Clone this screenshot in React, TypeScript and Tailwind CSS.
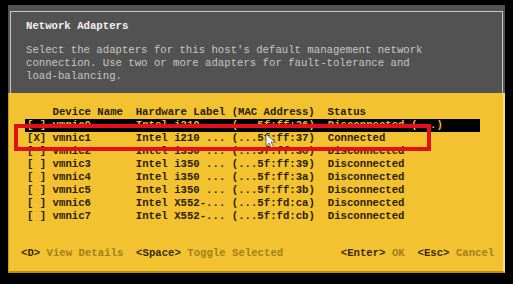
const rows = [
  { box: "[ ]", name: "vmnic0", hw: "Intel i210 ...", mac: "(...5f:ff:36)", status: "Disconnected (...)" },
  { box: "[X]", name: "vmnic1", hw: "Intel i210 ...", mac: "(...5f:ff:37)", status: "Connected" },
  { box: "[ ]", name: "vmnic2", hw: "Intel i350 ...", mac: "(...5f:ff:38)", status: "Disconnected" },
  { box: "[ ]", name: "vmnic3", hw: "Intel i350 ...", mac: "(...5f:ff:39)", status: "Disconnected" },
  { box: "[ ]", name: "vmnic4", hw: "Intel i350 ...", mac: "(...5f:ff:3a)", status: "Disconnected" },
  { box: "[ ]", name: "vmnic5", hw: "Intel i350 ...", mac: "(...5f:ff:3b)", status: "Disconnected" },
  { box: "[ ]", name: "vmnic6", hw: "Intel X552-...", mac: "(...5f:fd:ca)", status: "Disconnected" },
  { box: "[ ]", name: "vmnic7", hw: "Intel X552-...", mac: "(...5f:fd:cb)", status: "Disconnected" },
];

const Row = ({ r, active }: { r: (typeof rows)[number]; active?: boolean }) => (
  <div
    className={`flex h-[13px] w-[455px] items-center pl-[2px] ${
      active ? "bg-black text-[#e8b82c]" : "text-[#2a2000]"
    }`}
  >
    <span className="w-[25.6px]">{r.box}</span>
    <span className="w-[83.2px]">{r.name}</span>
    <span className="w-[96px]">{r.hw}</span>
    <span className="w-[96px]">{r.mac}</span>
    <span>{r.status}</span>
  </div>
);

export default function App() {
  return (
    <div
      className="relative h-[284px] w-[513px] overflow-hidden bg-black pl-[8px] pt-[5px] text-[10.67px] leading-[13px] whitespace-pre"
      style={{ fontFamily: '"Liberation Mono", "DejaVu Sans Mono", monospace' }}
    >
      <div className="flex h-[268px] w-[497px] flex-col">
        {/* grey header area */}
        <div className="h-[88px] bg-[#525252] px-[2px] pt-[6px]">
          <div className="h-full border-l border-r border-t border-[#c8c8c8] pl-[15px] pt-[8px]">
            <div className="font-bold text-[#f2f2f2]">Network Adapters</div>
            <div className="mt-[11px] text-[#c6c6c6]">
              <div>Select the adapters for this host's default management network</div>
              <div>connection. Use two or more adapters for fault-tolerance and</div>
              <div>load-balancing.</div>
            </div>
          </div>
        </div>

        {/* yellow list area */}
        <div className="flex-1 border-b-2 border-l border-r-2 border-b-[#b88c10] border-l-[#c99a14] border-r-[#fbe07a] bg-[#f3c230] pl-[16px] pt-[13px] font-bold">
          <div className="h-[13px] pl-[2px] text-[#2a2000]">
            {"    Device Name  Hardware Label (MAC Address)  Status"}
          </div>
          {rows.map((r, i) => (
            <Row key={r.name} r={r} active={i === 0} />
          ))}
          <div className="mt-[24px] -ml-[4px] flex">
            <span className="text-[#3a2c00]">{"<D>"}</span>
            <span className="text-[#a07e1c]">{" View Details  "}</span>
            <span className="text-[#3a2c00]">{"<Space>"}</span>
            <span className="text-[#a07e1c]">{" Toggle Selected         "}</span>
            <span className="text-[#3a2c00]">{"<Enter>"}</span>
            <span className="text-[#a07e1c]">{" OK  "}</span>
            <span className="text-[#3a2c00]">{"<Esc>"}</span>
            <span className="text-[#a07e1c]">{" Cancel"}</span>
          </div>
        </div>
      </div>

      {/* red annotation box */}
      <div className="absolute left-[14px] top-[124px] h-[27px] w-[417px] border-4 border-[#e3101c]" />

      {/* mouse cursor */}
      <svg className="absolute left-[265px] top-[133px]" width="12" height="16" viewBox="0 0 12 16">
        <path d="M1 1 L1 13 L4 10 L6.5 15 L8.5 14 L6 9 L10.5 9 Z" fill="#f4f4f4" stroke="#333" strokeWidth="0.6" />
      </svg>
    </div>
  );
}
